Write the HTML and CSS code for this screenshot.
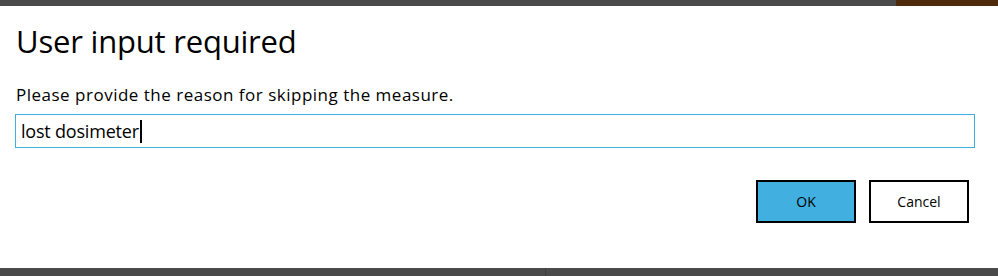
FILE: index.html
```html
<!DOCTYPE html>
<html lang="en">
<head>
    <meta charset="UTF-8">
    <title>User input required</title>
    <link rel="stylesheet" href="styles.css">
</head>
<body>

<div class="topbar">
    <div class="topbar-main"></div>
    <div class="topbar-accent"></div>
</div>

<div class="dialog">
    <h1 class="title">User input required</h1>
    <label class="prompt" for="reason">Please provide the reason for skipping the measure.</label>
    <div class="field">
        <span class="field-text">lost dosimeter</span><span class="caret"></span>
    </div>
    <div class="actions">
        <button class="btn btn-ok">OK</button>
        <button class="btn btn-cancel">Cancel</button>
    </div>
</div>

<div class="bottombar">
    <div class="bottombar-left"></div>
    <div class="bottombar-right"></div>
</div>

</body>
</html>
```

FILE: styles.css
```css
html, body { margin: 0; padding: 0; height: 276px; overflow: hidden; }
body { font-family: 'Open Sans', 'Noto Sans', sans-serif; background: #fff; color: #000; display: flex; flex-direction: column; }

.topbar { display: flex; height: 6px; flex: none; }
.topbar-main { flex: none; width: 896px; background: #4a4a4a; }
.topbar-accent { flex: 1; background: #4d2a09; }

.dialog { flex: 1; padding: 0 23px 0 15px; display: flex; flex-direction: column; }
.title { font-size: 31px; font-weight: 400; margin: 16px 0 0 1px; line-height: 38px; letter-spacing: -0.2px; }
.prompt { font-size: 17px; line-height: 22px; margin: 24px 0 0 1px; letter-spacing: 0.5px; }

.field { height: 32px; border: 1px solid #41aee0; margin-top: 8px; display: flex; align-items: center; padding-left: 5px; font-size: 18px; letter-spacing: -0.2px; }
.caret { display: inline-block; width: 2px; height: 23px; background: #000; margin-left: 1px; }

.actions { display: flex; justify-content: flex-end; gap: 13px; margin-top: 32px; padding-right: 6px; }
.btn { font-family: inherit; font-size: 14px; color: #000; width: 100px; height: 43px; border: 2px solid #000; border-radius: 0; padding: 0; cursor: pointer; }
.btn-ok { background: #41b0e1; }
.btn-cancel { background: #fff; }

.bottombar { display: flex; height: 8px; flex: none; }
.bottombar-left { flex: none; width: 545px; background: #4a4a4a; border-right: 1px solid #3e3e3e; }
.bottombar-right { flex: 1; background: #4a4a4a; }
```
